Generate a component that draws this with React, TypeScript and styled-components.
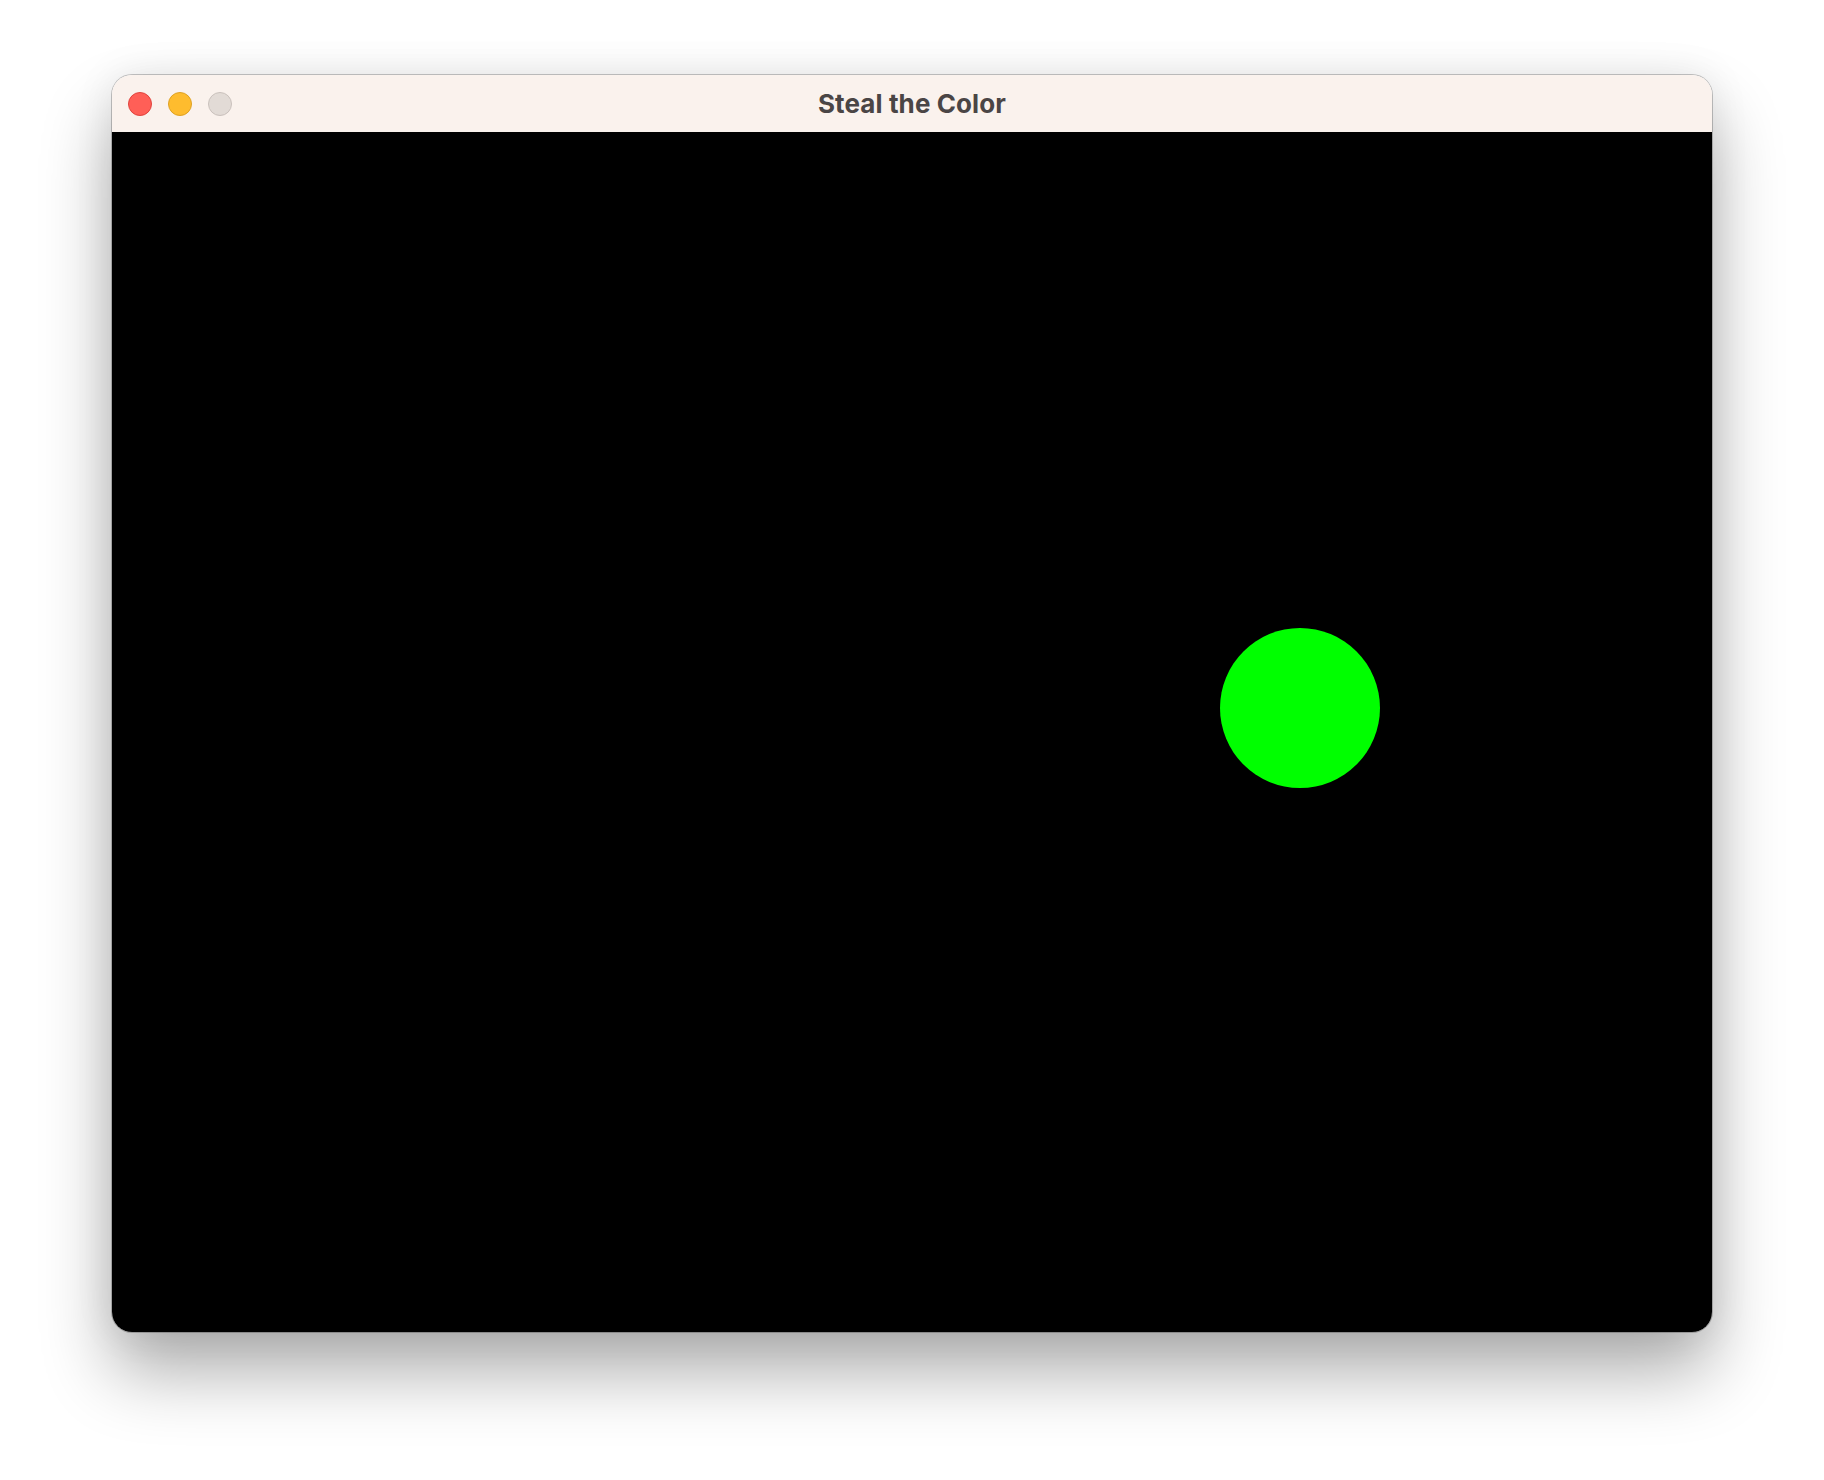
import React from "react";
import styled, { createGlobalStyle } from "styled-components";

const GlobalStyle = createGlobalStyle`
  html, body {
    margin: 0;
    padding: 0;
    background: #ffffff;
  }
  body {
    font-family: Inter, "Noto Sans", "Liberation Sans", sans-serif;
  }
`;

const Desktop = styled.div`
  width: 1824px;
  height: 1480px;
  display: flex;
  justify-content: center;
  align-items: flex-start;
  padding-top: 75px;
  box-sizing: border-box;
  background: #ffffff;
`;

const Window = styled.div`
  width: 1600px;
  display: flex;
  flex-direction: column;
  border-radius: 20px;
  overflow: hidden;
  box-shadow: 0 0 0 1px rgba(0, 0, 0, 0.22), 0 40px 70px rgba(0, 0, 0, 0.32),
    0 0 40px rgba(0, 0, 0, 0.08);
`;

const TitleBar = styled.div`
  position: relative;
  height: 57px;
  display: flex;
  align-items: center;
  justify-content: center;
  background: #faf2ed;
`;

const Lights = styled.div`
  position: absolute;
  left: 16px;
  top: 0;
  bottom: 0;
  display: flex;
  align-items: center;
  gap: 16px;
`;

const Light = styled.span<{ $fill: string; $edge: string }>`
  width: 24px;
  height: 24px;
  border-radius: 50%;
  box-sizing: border-box;
  background: ${(p) => p.$fill};
  border: 1px solid ${(p) => p.$edge};
`;

const Title = styled.div`
  font-size: 26px;
  font-weight: 700;
  color: #4a4545;
  letter-spacing: 0.1px;
`;

const Canvas = styled.div`
  position: relative;
  width: 1600px;
  height: 1200px;
  background: #000000;
`;

const Ball = styled.div`
  position: absolute;
  width: 160px;
  height: 160px;
  border-radius: 50%;
  background: #00ff00;
`;

export default function App() {
  const ball = { x: 1188, y: 576, r: 80 };
  return (
    <>
      <GlobalStyle />
      <Desktop>
        <Window>
          <TitleBar>
            <Lights>
              <Light $fill="#ff5f57" $edge="#e0443e" />
              <Light $fill="#febc2e" $edge="#dea123" />
              <Light $fill="#e2dbd6" $edge="#c9c1bc" />
            </Lights>
            <Title>Steal the Color</Title>
          </TitleBar>
          <Canvas>
            <Ball style={{ left: ball.x - ball.r, top: ball.y - ball.r }} />
          </Canvas>
        </Window>
      </Desktop>
    </>
  );
}
